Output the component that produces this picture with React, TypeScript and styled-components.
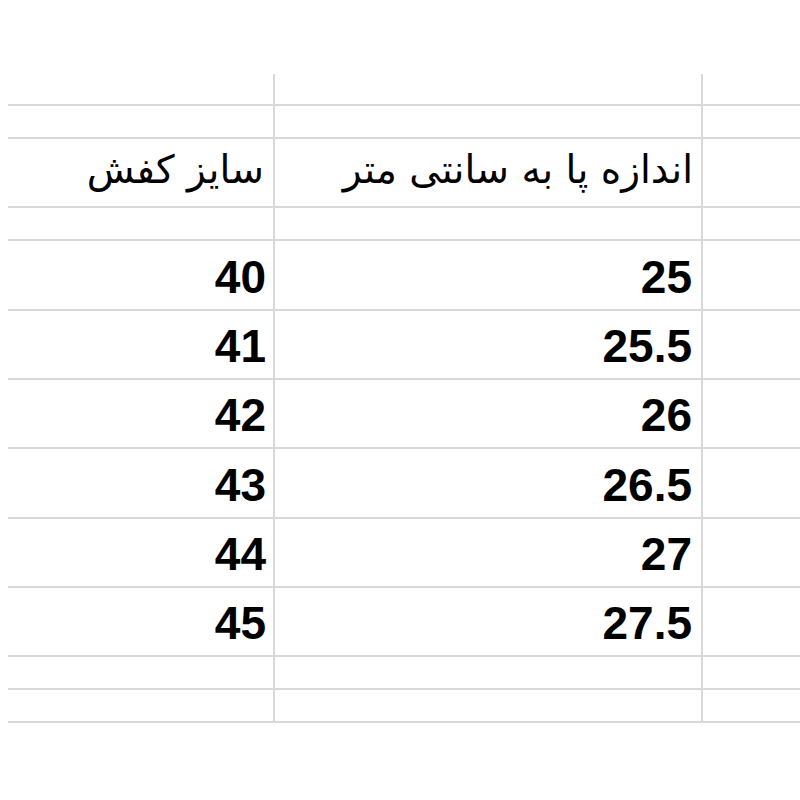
import React from "react";
import styled, { createGlobalStyle } from "styled-components";

const Global = createGlobalStyle`
  html, body { margin: 0; padding: 0; background: #ffffff; }
  body { width: 800px; height: 800px; overflow: hidden; }
`;

const Sheet = styled.div`
  padding-top: 74px;
  margin-left: 8px;
  display: flex;
  flex-direction: column;
  border-bottom: 2px solid #d9d9d9;
  width: 792px;
`;

const Row = styled.div<{ $h: number; $first?: boolean }>`
  display: grid;
  grid-template-columns: 267px 428px 1fr;
  height: ${(p) => p.$h}px;
  box-sizing: border-box;
  border-top: ${(p) => (p.$first ? "none" : "2px solid #d9d9d9")};
`;

const Cell = styled.div<{ $last?: boolean }>`
  border-right: ${(p) => (p.$last ? "none" : "2px solid #d9d9d9")};
  display: flex;
  justify-content: flex-end;
  align-items: flex-end;
  min-width: 0;
`;

const NumCell = styled(Cell)<{ $pr: number }>`
  font-family: "Liberation Sans", Arial, sans-serif;
  font-weight: 700;
  font-size: 46px;
  line-height: 46px;
  color: #000;
  padding-right: ${(p) => p.$pr}px;
  padding-bottom: 9px;
`;

const HeadCell = styled(Cell)<{ $pr: number }>`
  font-family: "DejaVu Sans", sans-serif;
  font-size: 39px;
  line-height: 46px;
  color: #000;
  padding-right: ${(p) => p.$pr}px;
  padding-bottom: 13px;
  white-space: nowrap;
`;

const RtlText = styled.span`
  direction: rtl;
  unicode-bidi: isolate;
`;

const data: [string, string][] = [
  ["40", "25"],
  ["41", "25.5"],
  ["42", "26"],
  ["43", "26.5"],
  ["44", "27"],
  ["45", "27.5"],
];
const dataHeights = [70, 69, 69, 70, 69, 69];

const EmptyRow = ({ h, first }: { h: number; first?: boolean }) => (
  <Row $h={h} $first={first}>
    <Cell />
    <Cell />
    <Cell $last />
  </Row>
);

export default function App() {
  return (
    <>
      <Global />
      <Sheet>
        <EmptyRow h={30} first />
        <EmptyRow h={33} />
        <Row $h={69}>
          <HeadCell $pr={9}>
            <RtlText dir="rtl">سایز کفش</RtlText>
          </HeadCell>
          <HeadCell $pr={8}>
            <RtlText dir="rtl">اندازه پا به سانتی متر</RtlText>
          </HeadCell>
          <Cell $last />
        </Row>
        <EmptyRow h={33} />
        {data.map(([a, b], i) => (
          <Row key={a} $h={dataHeights[i]}>
            <NumCell $pr={7}>{a}</NumCell>
            <NumCell $pr={9}>{b}</NumCell>
            <Cell $last />
          </Row>
        ))}
        <EmptyRow h={33} />
        <EmptyRow h={33} />
      </Sheet>
    </>
  );
}
